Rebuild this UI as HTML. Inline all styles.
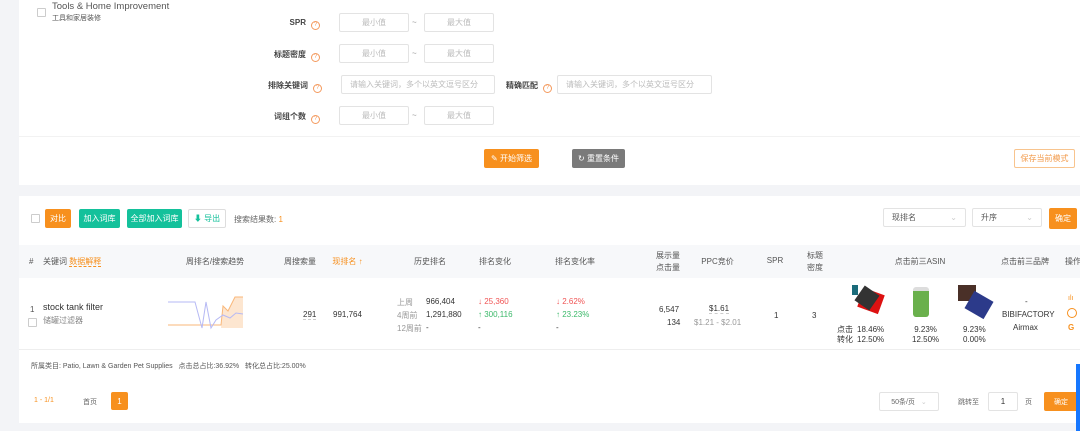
<!DOCTYPE html>
<html><head><meta charset="utf-8"><style>
*{margin:0;padding:0;box-sizing:border-box}
body{width:1080px;height:431px;background:#f3f4f7;font-family:"Liberation Sans","Noto Sans CJK SC",sans-serif;font-size:8px;color:#333;position:relative;overflow:hidden}
.a{position:absolute;white-space:nowrap}
.p{position:absolute;background:#fff}
.in{position:absolute;border:1px solid #e3e3e3;border-radius:2px;background:#fff;color:#bbb;font-size:8px;display:flex;align-items:center;justify-content:center;height:19px}
.lb{position:absolute;font-size:8px;color:#444;text-align:right;font-weight:bold}
.q{display:inline-block;width:9px;height:9px;border:1px solid #f49a5e;border-radius:50%;color:#f49a5e;font-size:6px;line-height:7px;text-align:center;margin-left:5px;vertical-align:-1px;font-weight:normal}
.btn{position:absolute;height:19px;border-radius:2px;color:#fff;font-size:8px;display:flex;align-items:center;justify-content:center}
.cb{position:absolute;width:9px;height:9px;border:1px solid #ccc;border-radius:1px;background:#fff}
.h{position:absolute;color:#555;font-size:8px;text-align:center}
.g{color:#999}
</style></head><body>
<div class="p" style="left:19px;top:0;width:1061px;height:185px"></div>
<div class="a" style="left:19px;top:136px;width:1061px;height:1px;background:#f2f2f2"></div>
<div class="cb" style="left:37px;top:8px"></div>
<div class="a" style="left:52px;top:1px;font-size:9.5px;color:#555">Tools &amp; Home Improvement</div>
<div class="a" style="left:52px;top:13px;font-size:7px;color:#555">工具和家居装修</div>

<div class="lb" style="left:200px;width:120px;top:18px">SPR<span class="q">?</span></div>
<div class="in" style="left:339px;top:13px;width:70px">最小值</div><div class="a g" style="left:412px;top:18px">~</div>
<div class="in" style="left:424px;top:13px;width:70px">最大值</div>
<div class="lb" style="left:200px;width:120px;top:49px">标题密度<span class="q">?</span></div>
<div class="in" style="left:339px;top:44px;width:70px">最小值</div><div class="a g" style="left:412px;top:49px">~</div>
<div class="in" style="left:424px;top:44px;width:70px">最大值</div>
<div class="lb" style="left:200px;width:122px;top:80px">排除关键词<span class="q">?</span></div>
<div class="in" style="left:341px;top:75px;width:154px;justify-content:flex-start;padding-left:8px">请输入关键词，多个以英文逗号区分</div>
<div class="lb" style="left:490px;width:62px;top:80px">精确匹配<span class="q">?</span></div>
<div class="in" style="left:557px;top:75px;width:155px;justify-content:flex-start;padding-left:8px">请输入关键词，多个以英文逗号区分</div>
<div class="lb" style="left:200px;width:120px;top:111px">词组个数<span class="q">?</span></div>
<div class="in" style="left:339px;top:106px;width:70px">最小值</div><div class="a g" style="left:412px;top:111px">~</div>
<div class="in" style="left:424px;top:106px;width:70px">最大值</div>

<div class="btn" style="left:484px;top:149px;width:55px;background:#f7901e">✎ 开始筛选</div>
<div class="btn" style="left:572px;top:149px;width:53px;background:#7a7a7a">↻ 重置条件</div>
<div class="btn" style="left:1014px;top:149px;width:61px;background:#fff;border:1px solid #f8c48e;color:#f29a4a">保存当前模式</div>

<div class="p" style="left:19px;top:196px;width:1061px;height:227px"></div>
<div class="cb" style="left:31px;top:214px"></div>
<div class="btn" style="left:45px;top:209px;width:26px;background:#f7901e">对比</div>
<div class="btn" style="left:79px;top:209px;width:41px;background:#14c19b">加入词库</div>
<div class="btn" style="left:127px;top:209px;width:55px;background:#14c19b">全部加入词库</div>
<div class="btn" style="left:188px;top:209px;width:38px;background:#fff;border:1px solid #ddd;color:#14c19b">⬇ 导出</div>
<div class="a" style="left:234px;top:214px;color:#666">搜索结果数: <span style="color:#f7901e">1</span></div>
<div class="in" style="left:883px;top:208px;width:83px;color:#555;justify-content:space-between;padding:0 8px">现排名<span style="color:#ccc">⌄</span></div>
<div class="in" style="left:972px;top:208px;width:70px;color:#555;justify-content:space-between;padding:0 8px">升序<span style="color:#ccc">⌄</span></div>
<div class="btn" style="left:1049px;top:208px;width:28px;height:21px;background:#f7901e">确定</div>

<div class="a" style="left:19px;top:245px;width:1061px;height:33px;background:#f7f8fa"></div>
<div class="a" style="left:29px;top:257px;color:#555">#</div>
<div class="a" style="left:43px;top:256px;color:#555">关键词 <span style="color:#f7901e;border-bottom:1px dashed #f7901e">数据解释</span></div>
<div class="h" style="left:170px;width:90px;top:256px">周排名/搜索趋势</div>
<div class="h" style="left:280px;width:40px;top:256px">周搜索量</div>
<div class="h" style="left:325px;width:45px;top:256px;color:#f7901e">现排名 ↑</div>
<div class="h" style="left:400px;width:60px;top:256px">历史排名</div>
<div class="h" style="left:470px;width:50px;top:256px">排名变化</div>
<div class="h" style="left:550px;width:50px;top:256px">排名变化率</div>
<div class="h" style="left:648px;width:40px;top:250px;line-height:12px">展示量<br>点击量</div>
<div class="h" style="left:690px;width:55px;top:256px">PPC竞价</div>
<div class="h" style="left:760px;width:30px;top:256px">SPR</div>
<div class="h" style="left:800px;width:30px;top:250px;line-height:12px">标题<br>密度</div>
<div class="h" style="left:870px;width:100px;top:256px">点击前三ASIN</div>
<div class="h" style="left:995px;width:60px;top:256px">点击前三品牌</div>
<div class="a" style="left:1065px;top:256px;color:#555">操作</div>

<div class="a" style="left:30px;top:305px;color:#555">1</div>
<div class="cb" style="left:28px;top:318px"></div>
<div class="a" style="left:43px;top:302px;font-size:9px">stock tank filter</div>
<div class="a" style="left:43px;top:315px;color:#888">储罐过滤器</div>
<svg class="a" style="left:168px;top:294px" width="78" height="40"><path d="M53,34 L55,12 L60,17 L67,3 L75,3 L75,34 Z" fill="#fde6d0"/><polyline points="0,31 28,31 33,31 35,31 43,31 45,31 53,31 55,12 60,17 67,3 75,3" fill="none" stroke="#f9b77a" stroke-width="1"/><polyline points="0,8 27,8 34,34 38,8 43,34 48,26 55,21 62,24 68,19 75,20" fill="none" stroke="#b6b9f4" stroke-width="1"/></svg>
<div class="a" style="left:303px;top:310px;border-bottom:1px dashed #ccc">291</div>
<div class="a" style="left:333px;top:310px">991,764</div>
<div class="a g" style="left:397px;top:297px">上周</div><div class="a" style="left:426px;top:297px">966,404</div>
<div class="a g" style="left:397px;top:310px">4周前</div><div class="a" style="left:426px;top:310px">1,291,880</div>
<div class="a g" style="left:397px;top:323px">12周前</div><div class="a" style="left:426px;top:323px">-</div>
<div class="a" style="left:478px;top:297px;color:#f05454">↓ 25,360</div>
<div class="a" style="left:478px;top:310px;color:#3cb96a">↑ 300,116</div>
<div class="a" style="left:478px;top:323px">-</div>
<div class="a" style="left:556px;top:297px;color:#f05454">↓ 2.62%</div>
<div class="a" style="left:556px;top:310px;color:#3cb96a">↑ 23.23%</div>
<div class="a" style="left:556px;top:323px">-</div>
<div class="a" style="left:659px;top:305px">6,547</div>
<div class="a" style="left:667px;top:318px">134</div>
<div class="a" style="left:709px;top:304px;border-bottom:1px dashed #ccc">$1.61</div>
<div class="a g" style="left:694px;top:318px">$1.21 - $2.01</div>
<div class="a" style="left:774px;top:311px">1</div>
<div class="a" style="left:812px;top:311px">3</div>
<div class="a" style="left:852px;top:285px;width:34px;height:34px"><div style="position:absolute;left:8px;top:6px;width:22px;height:20px;background:#d11;transform:rotate(20deg)"></div><div style="position:absolute;left:6px;top:4px;width:18px;height:18px;background:#333;transform:rotate(35deg)"></div><div style="position:absolute;left:0;top:0;width:6px;height:10px;background:#1a6b7a"></div></div>
<div class="a" style="left:913px;top:287px;width:16px;height:30px;background:#6ab04c;border-radius:3px;border-top:4px solid #ddd"></div>
<div class="a" style="left:958px;top:285px;width:36px;height:34px"><div style="position:absolute;left:0;top:0;width:18px;height:16px;background:#4a3028"></div><div style="position:absolute;left:10px;top:10px;width:22px;height:20px;background:#2c3a8a;transform:rotate(30deg)"></div></div>
<div class="a" style="left:837px;top:325px;line-height:10px">点击<br>转化</div>
<div class="a" style="left:857px;top:325px;line-height:10px">18.46%<br>12.50%</div>
<div class="a" style="left:912px;top:325px;line-height:10px;text-align:center">9.23%<br>12.50%</div>
<div class="a" style="left:963px;top:325px;line-height:10px;text-align:center">9.23%<br>0.00%</div>
<div class="a" style="left:1025px;top:297px">-</div>
<div class="a" style="left:1002px;top:310px">BIBIFACTORY</div>
<div class="a" style="left:1013px;top:323px">Airmax</div>
<div class="a" style="left:1068px;top:295px;color:#f7901e;font-size:7px">ılı</div>
<div class="a" style="left:1067px;top:308px;width:10px;height:10px;border:1px solid #f7901e;border-radius:50%"></div>
<div class="a" style="left:1068px;top:323px;color:#f7901e;font-weight:bold">G</div>
<div class="a" style="left:19px;top:349px;width:1061px;height:1px;background:#eee"></div>
<div class="a" style="left:31px;top:361px;font-size:7px;color:#555">所属类目: Patio, Lawn &amp; Garden Pet Supplies &nbsp;&nbsp;点击总占比:36.92% &nbsp;&nbsp;转化总占比:25.00%</div>
<div class="a" style="left:34px;top:397px;color:#f7901e;font-size:7px">1 - 1/1</div>
<div class="a" style="left:83px;top:397px;color:#666;font-size:7px">首页</div>
<div class="btn" style="left:111px;top:392px;width:17px;height:18px;background:#f7901e">1</div>
<div class="in" style="left:879px;top:392px;width:60px;height:19px;color:#666;font-size:7px">50条/页 <span style="color:#ccc;margin-left:6px">⌄</span></div>
<div class="a" style="left:958px;top:397px;color:#666;font-size:7px">跳转至</div>
<div class="in" style="left:988px;top:392px;width:30px;color:#333">1</div>
<div class="a" style="left:1025px;top:397px;color:#666;font-size:7px">页</div>
<div class="btn" style="left:1044px;top:392px;width:34px;height:19px;background:#f7901e;font-size:7px">确定</div>
<div class="a" style="left:1076px;top:364px;width:4px;height:67px;background:#1677ff"></div>
</body></html>
